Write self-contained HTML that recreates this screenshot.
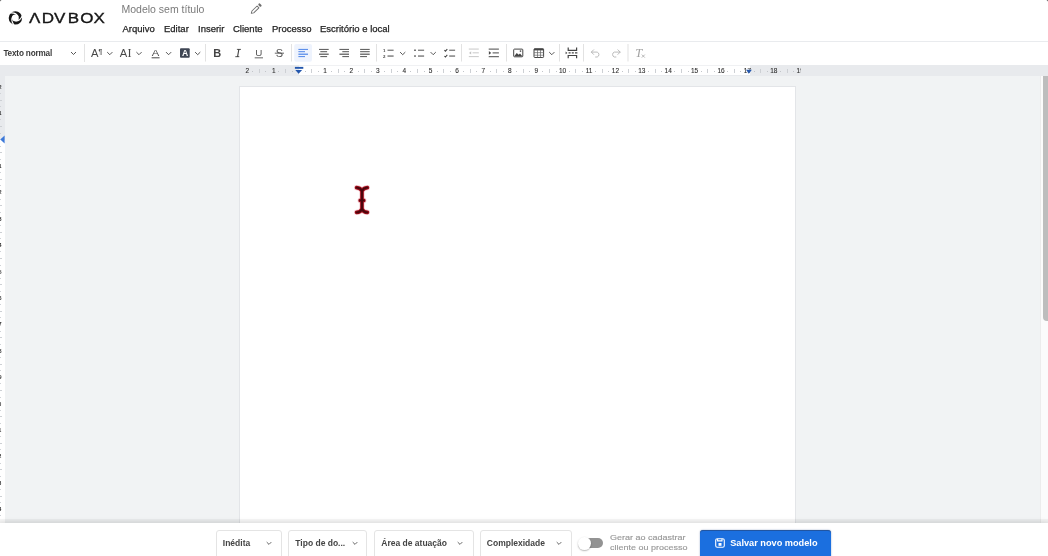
<!DOCTYPE html>
<html lang="pt-BR">
<head>
<meta charset="utf-8">
<title>Modelo sem título</title>
<style>
*{box-sizing:border-box;margin:0;padding:0}
html,body{width:1048px;height:556px;overflow:hidden;background:#fff}
body{font-family:"Liberation Sans",sans-serif;position:relative;color:#222}
#header,#toolbar,#rulerband,#bottom,#gerar,#save,#vruler{will-change:transform}
.abs{position:absolute}
#header{position:absolute;left:0;top:0;width:1048px;height:42px;background:#fff;border-bottom:1px solid #e9ebee}
#title{position:absolute;left:121.5px;top:3px;font-size:10.5px;line-height:12px;color:#7a7a7a;white-space:nowrap}
.menu{position:absolute;top:23px;-webkit-text-stroke:0.25px #1f1f1f;font-size:9.5px;line-height:11px;color:#1f1f1f;white-space:nowrap}
#toolbar{position:absolute;left:0;top:42px;width:1048px;height:23px;background:#fff}
.sep{position:absolute;top:2px;width:1px;height:18px;background:#e3e3e3}
.ic{position:absolute;overflow:visible}
#style{position:absolute;left:3.4px;top:7.1px;font-size:8.2px;line-height:10px;font-weight:bold;color:#3a3a3a;white-space:nowrap;letter-spacing:-0.18px}
#rulerband{position:absolute;left:0;top:65px;width:1048px;height:11px;background:#e8eaed}
#rclip{position:absolute;left:0;top:0;width:800.6px;height:11px;overflow:hidden}
#rulerwhite{position:absolute;left:298.6px;top:0;width:451.4px;height:9.9px;background:#fff;border-top:1.4px solid #f0f1f3}
.rn{position:absolute;top:1.1px;width:20px;text-align:center;font-size:6.5px;line-height:9px;color:#2e2e2e;-webkit-text-stroke:0.1px #2e2e2e}
.td{position:absolute;top:5.8px;width:1px;height:1.3px;background:#c2c5c9}
.tl{position:absolute;top:4px;width:1px;height:4.2px;background:#cdd0d4}
#editor{position:absolute;left:0;top:76px;width:1048px;height:480px;background:#f1f3f4}
#page{position:absolute;left:239px;top:9.6px;width:557px;height:480px;background:#fff;border:1px solid #e3e5e8}
#vruler{position:absolute;left:0;top:76px;width:4.8px;height:447px;background:#fff;overflow:hidden}
#vgray{position:absolute;left:0;top:0;width:5px;height:63.5px;background:#e8eaed}
.vn{position:absolute;left:-8.6px;width:10px;font-size:5px;line-height:8px;color:#2c2c2c;text-align:right;margin-top:-75px;font-weight:bold}
.vd{position:absolute;left:0;width:1.2px;height:1px;background:#cfd2d6;margin-top:-76px}
.vl{position:absolute;left:0;width:2.4px;height:1px;background:#cdd0d4;margin-top:-76px}
#sbtrack{position:absolute;left:1040.4px;top:76px;width:8px;height:447px;background:#fbfbfb;border-left:1px solid #ececec}
#sbthumb{position:absolute;left:1043px;top:70px;width:8px;height:251px;background:#bdbdbd;border-radius:4px;clip-path:inset(6px 0 0 0)}
#bottom{position:absolute;left:0;top:523.3px;width:1048px;height:33px;background:#fff;box-shadow:0 -2px 5px rgba(0,0,0,.05)}
#shade{position:absolute;left:0;top:519.1px;width:1048px;height:4.2px;background:linear-gradient(rgba(0,0,0,.035),rgba(0,0,0,.07))}
.sel{position:absolute;top:7px;height:34px;border:1px solid #e4e4e4;border-radius:3px;background:#fff}
.sel span{position:absolute;left:6.3px;top:6.7px;font-size:8.5px;line-height:10px;font-weight:bold;color:#444;white-space:nowrap}
#gerar{position:absolute;left:609.6px;top:533.3px;font-size:8px;line-height:10px;color:#989898;-webkit-text-stroke:0.15px #989898;white-space:nowrap;transform:scaleX(1.125);transform-origin:0 0}
#save{position:absolute;left:700.2px;top:530.4px;width:131px;height:34px;background:#1b6fdf;border-radius:3px;box-shadow:0 0 1.5px rgba(20,60,130,.6),inset 0 0.9px 0 rgba(40,60,100,.5)}
#save span{position:absolute;left:30.2px;top:7.7px;font-size:9.2px;line-height:11px;font-weight:bold;color:#fff;white-space:nowrap}
</style>
</head>
<body>
<div id="header">
  <!-- corner mark -->
  <svg class="ic" style="left:0;top:0" width="4" height="3" viewBox="0 0 4 3"><path d="M0 0H1.7A1.7 1.7 0 0 0 0 1.7z" fill="#2c2c2c"/></svg>
  <!-- logo -->
  <svg class="ic" style="left:8px;top:10px" width="16" height="16" viewBox="0 0 16 16">
    <circle cx="7.4" cy="7.9" r="5.05" fill="none" stroke="#161616" stroke-width="3.3"/>
    <path d="M1.98 3.02 Q8.37 2.39 10.09 6.81 M14.34 5.64 Q11.69 11.50 7.00 10.77 M5.88 15.04 Q2.14 9.82 5.11 6.11" fill="none" stroke="#fff" stroke-width="1.15"/>
  </svg>
  <svg class="ic" style="left:0;top:0" width="120" height="40" viewBox="0 0 120 40">
    <text transform="translate(0 22.9) scale(1.15 1)" font-family="Liberation Sans, sans-serif" font-size="14.8" fill="#161616" stroke="#161616" stroke-width="0.35" x="25.13 36.35 46.87 58.96 69.87 81.4" y="0">ΛDVBOX</text>
  </svg>
  <svg class="ic" style="left:1044px;top:0" width="4" height="3" viewBox="0 0 4 3"><path d="M4 0H2.3A1.7 1.7 0 0 1 4 1.7z" fill="#2c2c2c"/></svg>
  <div id="title">Modelo sem título</div>
  <!-- pencil -->
  <svg class="ic" style="left:250px;top:3px" width="13" height="13" viewBox="0 0 13 13">
    <g transform="translate(1.1 10.6) rotate(-44)">
      <path d="M0.3 0 L2.4 -1.3 H9.6 V1.3 H2.4 Z" fill="none" stroke="#6e6e6e" stroke-width="0.95" stroke-linejoin="round"/>
      <rect x="11.2" y="-1.8" width="2.2" height="3.6" rx="0.9" fill="#6e6e6e"/>
    </g>
  </svg>
  <div class="menu" style="left:122.5px">Arquivo</div>
  <div class="menu" style="left:164px">Editar</div>
  <div class="menu" style="left:198px">Inserir</div>
  <div class="menu" style="left:233px">Cliente</div>
  <div class="menu" style="left:272px">Processo</div>
  <div class="menu" style="left:320px">Escritório e local</div>
</div>

<div id="toolbar">
  <div id="style">Texto normal</div>
  <svg class="ic chev" style="left:70.1px;top:9px" width="7" height="5" viewBox="0 0 7 5"><path d="M1 1 L3.5 3.5 L6 1" fill="none" stroke="#444" stroke-width="0.9"/></svg>
  <div class="sep" style="left:84.2px"></div>
    <svg class="ic" style="left:0;top:0" width="700" height="23" viewBox="0 42 700 23" font-family="Liberation Sans, sans-serif">
    <!-- active align-left background -->
    <rect x="294.2" y="44" width="17.8" height="17.7" rx="2" fill="#eef3fd"/>
    <!-- separators -->
    <g fill="#e2e2e2">
      <rect x="205" y="44" width="1" height="17.5"/>
      <rect x="291" y="44" width="1" height="17.5"/>
      <rect x="376" y="44" width="1" height="17.5"/>
      <rect x="461" y="44" width="1" height="17.5"/>
      <rect x="506" y="44" width="1" height="17.5"/>
      <rect x="559" y="44" width="1" height="17.5"/>
      <rect x="583" y="44" width="1" height="17.5"/>
      <rect x="627.5" y="44" width="1" height="17.5"/>
    </g>
    <!-- chevrons -->
    <g fill="none" stroke="#444" stroke-width="0.9">
      <path d="M107.2 52.1 L109.8 54.7 L112.4 52.1"/>
      <path d="M136.4 52.1 L139 54.7 L141.6 52.1"/>
      <path d="M166 52.1 L168.6 54.7 L171.2 52.1"/>
      <path d="M195.1 52.1 L197.7 54.7 L200.3 52.1"/>
      <path d="M400.1 52.1 L402.7 54.7 L405.3 52.1"/>
      <path d="M430.6 52.1 L433.2 54.7 L435.8 52.1"/>
      <path d="M549.2 52.1 L551.8 54.7 L554.4 52.1"/>
    </g>
    <!-- font family A¶ -->
    <text x="91" y="57.3" font-size="11.2" fill="#484848">A</text>
    <text x="98.5" y="53.8" font-size="6.6" font-weight="bold" fill="#555">¶</text>
    <!-- font size AI -->
    <text x="119.8" y="57.3" font-size="11.2" fill="#484848">A</text>
    <text x="127.6" y="57.3" font-size="12.1" font-family="Liberation Serif, serif" fill="#484848">I</text>
    <!-- font color -->
    <text transform="translate(151.7 56.1) scale(1.2 1)" x="0" y="0" font-size="9.4" fill="#484848">A</text>
    <rect x="151.6" y="57.3" width="8" height="1" fill="#484848"/>
    <!-- highlight -->
    <rect x="180" y="48.2" width="9.7" height="9.6" rx="1" fill="#3f4654"/>
    <text x="182" y="56.3" font-size="8.6" font-weight="bold" fill="#fff">A</text>
    <!-- B I U S -->
    <text x="213.2" y="57" font-size="11" font-weight="bold" fill="#444">B</text>
    <text x="235.9" y="57" font-size="12" font-style="italic" font-family="Liberation Serif, serif" fill="#444">I</text>
    <path d="M236.9 49.4 H241 M235.2 56.7 H239.3" stroke="#444" stroke-width="0.8" fill="none"/>
    <text x="255.3" y="56" font-size="9.8" fill="#555">U</text>
    <rect x="254.7" y="57.4" width="8.3" height="0.9" fill="#555"/>
    <text x="275.8" y="57.2" font-size="11" fill="#555">S</text>
    <rect x="274.8" y="52.7" width="9.2" height="0.9" fill="#555"/>
    <!-- align left (active) -->
    <g fill="#4f86e8">
      <rect x="298.4" y="48.9" width="9.6" height="1"/>
      <rect x="298.4" y="51.2" width="6.6" height="1"/>
      <rect x="298.4" y="53.6" width="9.6" height="1.2"/>
      <rect x="298.4" y="56.1" width="6.6" height="1"/>
    </g>
    <g fill="#555">
      <!-- center -->
      <rect x="319" y="48.9" width="9.7" height="1"/>
      <rect x="320.3" y="51.2" width="6.8" height="1"/>
      <rect x="319" y="53.6" width="9.7" height="1.2"/>
      <rect x="320.3" y="56.1" width="6.8" height="1"/>
      <!-- right -->
      <rect x="339.4" y="48.9" width="9.6" height="1"/>
      <rect x="342.3" y="51.2" width="6.7" height="1"/>
      <rect x="339.4" y="53.6" width="9.6" height="1.2"/>
      <rect x="342.3" y="56.1" width="6.7" height="1"/>
      <!-- justify -->
      <rect x="360.1" y="48.9" width="9.6" height="1"/>
      <rect x="360.1" y="51.2" width="9.6" height="1"/>
      <rect x="360.1" y="53.6" width="9.6" height="1.2"/>
      <rect x="360.1" y="56.1" width="6.9" height="1"/>
      <!-- numbered list lines -->
      <rect x="387.5" y="49.7" width="6.1" height="1"/>
      <rect x="387.5" y="55.5" width="6.1" height="1.1"/>
      <!-- bullets -->
      <rect x="414.2" y="49.5" width="1.6" height="1.5"/>
      <rect x="414.2" y="55.3" width="1.6" height="1.5"/>
      <rect x="418" y="49.7" width="6.1" height="1"/>
      <rect x="418" y="55.5" width="6.1" height="1.1"/>
      <!-- todo lines -->
      <rect x="449.2" y="49.7" width="5.9" height="1"/>
      <rect x="449.2" y="55.5" width="5.9" height="1.1"/>
    </g>
    <text x="383" y="51.7" font-size="4.4" font-weight="bold" fill="#444">1</text>
    <text x="383" y="57.6" font-size="4.4" font-weight="bold" fill="#444">2</text>
    <g fill="none" stroke="#444" stroke-width="1.05">
      <path d="M444.4 50.2 L445.4 51.2 L447.3 49.1"/>
      <path d="M444.4 56 L445.4 57 L447.3 54.9"/>
    </g>
    <!-- outdent (disabled) -->
    <g fill="#c2c2c2">
      <rect x="468.8" y="48.6" width="10" height="0.9"/>
      <rect x="472.6" y="52.4" width="6.2" height="0.9"/>
      <rect x="468.8" y="56.2" width="10" height="0.9"/>
      <path d="M471.2 51.2 V54.6 L469 52.9 Z"/>
    </g>
    <!-- indent -->
    <g fill="#4a4a4a">
      <rect x="488.7" y="48.6" width="10.2" height="1"/>
      <rect x="492.6" y="52.4" width="6.3" height="1"/>
      <rect x="488.7" y="56.2" width="10.2" height="1"/>
      <path d="M488.9 51.1 V54.7 L491.2 52.9 Z"/>
    </g>
    <!-- image -->
    <rect x="513.7" y="49.1" width="9.1" height="7.7" rx="0.8" fill="none" stroke="#444" stroke-width="1"/>
    <path d="M514.2 56.3 L516.8 53 L518.6 54.8 L520 53.6 L522.3 56.3 Z" fill="#444"/>
    <rect x="519.8" y="50.4" width="1.4" height="1.4" fill="#444"/>
    <!-- table -->
    <rect x="534" y="48.8" width="9.6" height="8.7" rx="0.8" fill="none" stroke="#444" stroke-width="1"/>
    <rect x="534" y="48.6" width="9.6" height="1.8" fill="#444"/>
    <g fill="#666">
      <rect x="537" y="50" width="0.7" height="7.4"/>
      <rect x="540" y="50" width="0.7" height="7.4"/>
      <rect x="534" y="52.4" width="9.6" height="0.7"/>
      <rect x="534" y="54.8" width="9.6" height="0.7"/>
    </g>
    <!-- page break -->
    <g fill="none" stroke="#444" stroke-width="1.2">
      <path d="M568.2 47.6 V50.3 H576.6 V47.6"/>
      <path d="M568.2 58.2 V55.5 H576.6 V58.2"/>
      <path d="M568.6 52.9 H570.6 M571.8 52.9 H573.8 M575 52.9 H577.4" stroke-width="1.3"/>
    </g>
    <path d="M565.6 51.5 V54.3 L567.4 52.9 Z" fill="#444"/>
    <!-- undo / redo (disabled) -->
    <g fill="none" stroke="#b3b3b3" stroke-width="0.9" stroke-linecap="round" stroke-linejoin="round">
      <path d="M593.6 49.8 L591.3 52.1 L593.6 54.4"/>
      <path d="M591.5 52.1 H597.2 A2.6 2.6 0 0 1 597.2 57 H595.6"/>
      <path d="M617.9 49.8 L620.2 52.1 L617.9 54.4"/>
      <path d="M620 52.1 H614.3 A2.6 2.6 0 0 0 614.3 57 H615.9"/>
    </g>
    <!-- remove format -->
    <text x="635.3" y="57.2" font-size="12.6" font-style="italic" font-family="Liberation Serif, serif" fill="#a2a2a2">T</text>
    <path d="M641.8 54.6 L644.8 57.6 M644.8 54.6 L641.8 57.6" fill="none" stroke="#a5a5a5" stroke-width="0.8"/>
  </svg>

</div>

<div id="rulerband">
  <div id="rulerwhite"></div>
<div id="rclip">
<span class="rn" style="left:237.30px">2</span>
<i class="td" style="left:251.90px"></i>
<i class="tl" style="left:258.50px"></i>
<i class="td" style="left:265.10px"></i>
<span class="rn" style="left:263.70px">1</span>
<i class="td" style="left:278.30px"></i>
<i class="tl" style="left:284.90px"></i>
<i class="td" style="left:291.50px"></i>
<i class="td" style="left:304.70px"></i>
<i class="tl" style="left:311.30px"></i>
<i class="td" style="left:317.90px"></i>
<span class="rn" style="left:315.00px">1</span>
<i class="td" style="left:331.10px"></i>
<i class="tl" style="left:337.70px"></i>
<i class="td" style="left:344.30px"></i>
<span class="rn" style="left:341.40px">2</span>
<i class="td" style="left:357.50px"></i>
<i class="tl" style="left:364.10px"></i>
<i class="td" style="left:370.70px"></i>
<span class="rn" style="left:367.80px">3</span>
<i class="td" style="left:383.90px"></i>
<i class="tl" style="left:390.50px"></i>
<i class="td" style="left:397.10px"></i>
<span class="rn" style="left:394.20px">4</span>
<i class="td" style="left:410.30px"></i>
<i class="tl" style="left:416.90px"></i>
<i class="td" style="left:423.50px"></i>
<span class="rn" style="left:420.60px">5</span>
<i class="td" style="left:436.70px"></i>
<i class="tl" style="left:443.30px"></i>
<i class="td" style="left:449.90px"></i>
<span class="rn" style="left:447.00px">6</span>
<i class="td" style="left:463.10px"></i>
<i class="tl" style="left:469.70px"></i>
<i class="td" style="left:476.30px"></i>
<span class="rn" style="left:473.40px">7</span>
<i class="td" style="left:489.50px"></i>
<i class="tl" style="left:496.10px"></i>
<i class="td" style="left:502.70px"></i>
<span class="rn" style="left:499.80px">8</span>
<i class="td" style="left:515.90px"></i>
<i class="tl" style="left:522.50px"></i>
<i class="td" style="left:529.10px"></i>
<span class="rn" style="left:526.20px">9</span>
<i class="td" style="left:542.30px"></i>
<i class="tl" style="left:548.90px"></i>
<i class="td" style="left:555.50px"></i>
<span class="rn" style="left:552.60px">10</span>
<i class="td" style="left:568.70px"></i>
<i class="tl" style="left:575.30px"></i>
<i class="td" style="left:581.90px"></i>
<span class="rn" style="left:579.00px">11</span>
<i class="td" style="left:595.10px"></i>
<i class="tl" style="left:601.70px"></i>
<i class="td" style="left:608.30px"></i>
<span class="rn" style="left:605.40px">12</span>
<i class="td" style="left:621.50px"></i>
<i class="tl" style="left:628.10px"></i>
<i class="td" style="left:634.70px"></i>
<span class="rn" style="left:631.80px">13</span>
<i class="td" style="left:647.90px"></i>
<i class="tl" style="left:654.50px"></i>
<i class="td" style="left:661.10px"></i>
<span class="rn" style="left:658.20px">14</span>
<i class="td" style="left:674.30px"></i>
<i class="tl" style="left:680.90px"></i>
<i class="td" style="left:687.50px"></i>
<span class="rn" style="left:684.60px">15</span>
<i class="td" style="left:700.70px"></i>
<i class="tl" style="left:707.30px"></i>
<i class="td" style="left:713.90px"></i>
<span class="rn" style="left:711.00px">16</span>
<i class="td" style="left:727.10px"></i>
<i class="tl" style="left:733.70px"></i>
<i class="td" style="left:740.30px"></i>
<span class="rn" style="left:737.40px">17</span>
<i class="td" style="left:753.50px"></i>
<i class="tl" style="left:760.10px"></i>
<i class="td" style="left:766.70px"></i>
<span class="rn" style="left:763.80px">18</span>
<i class="td" style="left:779.90px"></i>
<i class="tl" style="left:786.50px"></i>
<i class="td" style="left:793.10px"></i>
<span class="rn" style="left:790.20px">19</span>
</div>
  <!-- left indent marker -->
  <svg class="ic" style="left:294px;top:1px" width="10" height="9" viewBox="0 0 10 9">
    <rect x="0.9" y="0.9" width="8.4" height="1.9" fill="#2457ad"/>
    <path d="M1.3 4.1 H8.1 L4.6 7.8 Z" fill="#2457ad"/>
  </svg>
  <!-- right indent marker -->
  <svg class="ic" style="left:744px;top:3px" width="10" height="7" viewBox="0 0 10 7">
    <path d="M2.1 1.8 H7.9 L4.8 5.7 Z" fill="#2457ad"/>
  </svg>
</div>

<div id="editor">
  <div id="page"></div>
</div>
<div id="vruler">
  <div id="vgray"></div>
<span class="vn" style="top:81.80px">2</span>
<i class="vd" style="top:92.90px"></i>
<i class="vl" style="top:99.50px"></i>
<i class="vd" style="top:106.10px"></i>
<span class="vn" style="top:108.20px">1</span>
<i class="vd" style="top:119.30px"></i>
<i class="vl" style="top:125.90px"></i>
<i class="vd" style="top:132.50px"></i>
<i class="vd" style="top:145.70px"></i>
<i class="vl" style="top:152.30px"></i>
<i class="vd" style="top:158.90px"></i>
<span class="vn" style="top:161.00px">1</span>
<i class="vd" style="top:172.10px"></i>
<i class="vl" style="top:178.70px"></i>
<i class="vd" style="top:185.30px"></i>
<span class="vn" style="top:187.40px">2</span>
<i class="vd" style="top:198.50px"></i>
<i class="vl" style="top:205.10px"></i>
<i class="vd" style="top:211.70px"></i>
<span class="vn" style="top:213.80px">3</span>
<i class="vd" style="top:224.90px"></i>
<i class="vl" style="top:231.50px"></i>
<i class="vd" style="top:238.10px"></i>
<span class="vn" style="top:240.20px">4</span>
<i class="vd" style="top:251.30px"></i>
<i class="vl" style="top:257.90px"></i>
<i class="vd" style="top:264.50px"></i>
<span class="vn" style="top:266.60px">5</span>
<i class="vd" style="top:277.70px"></i>
<i class="vl" style="top:284.30px"></i>
<i class="vd" style="top:290.90px"></i>
<span class="vn" style="top:293.00px">6</span>
<i class="vd" style="top:304.10px"></i>
<i class="vl" style="top:310.70px"></i>
<i class="vd" style="top:317.30px"></i>
<span class="vn" style="top:319.40px">7</span>
<i class="vd" style="top:330.50px"></i>
<i class="vl" style="top:337.10px"></i>
<i class="vd" style="top:343.70px"></i>
<span class="vn" style="top:345.80px">8</span>
<i class="vd" style="top:356.90px"></i>
<i class="vl" style="top:363.50px"></i>
<i class="vd" style="top:370.10px"></i>
<span class="vn" style="top:372.20px">9</span>
<i class="vd" style="top:383.30px"></i>
<i class="vl" style="top:389.90px"></i>
<i class="vd" style="top:396.50px"></i>
<span class="vn" style="top:398.60px">10</span>
<i class="vd" style="top:409.70px"></i>
<i class="vl" style="top:416.30px"></i>
<i class="vd" style="top:422.90px"></i>
<span class="vn" style="top:425.00px">11</span>
<i class="vd" style="top:436.10px"></i>
<i class="vl" style="top:442.70px"></i>
<i class="vd" style="top:449.30px"></i>
<span class="vn" style="top:451.40px">12</span>
<i class="vd" style="top:462.50px"></i>
<i class="vl" style="top:469.10px"></i>
<i class="vd" style="top:475.70px"></i>
<span class="vn" style="top:477.80px">13</span>
<i class="vd" style="top:488.90px"></i>
<i class="vl" style="top:495.50px"></i>
<i class="vd" style="top:502.10px"></i>
<span class="vn" style="top:504.20px">14</span>
<i class="vd" style="top:515.30px"></i>
  <svg class="ic" style="left:0;top:58.6px" width="5" height="9" viewBox="0 0 5 9"><path d="M4.6 0.6 V8.4 L0.3 4.5 Z" fill="#3b78d8"/></svg>
</div>
<div id="sbtrack"></div>
<div id="sbthumb"></div>

<!-- I-beam cursor -->
<svg class="ic" style="left:352px;top:183px" width="20" height="34" viewBox="0 0 20 34">
  <g fill="none" stroke-linecap="round" stroke-linejoin="round">
    <path d="M4.6 4.6 Q8.6 4.8 10 8 Q11.4 4.8 15.4 4.6 M10 8 V26 M4.6 29.4 Q8.6 29.2 10 26 Q11.4 29.2 15.4 29.4 M8.2 17.4 H11.8" stroke="#ee9aa6" stroke-width="5.2" opacity=".5"/>
    <path d="M4.6 4.6 Q8.6 4.8 10 8 Q11.4 4.8 15.4 4.6 M10 8 V26 M4.6 29.4 Q8.6 29.2 10 26 Q11.4 29.2 15.4 29.4 M8.2 17.4 H11.8" stroke="#9d0c1a" stroke-width="3.7"/>
    <path d="M4.6 4.6 Q8.6 4.8 10 8 Q11.4 4.8 15.4 4.6 M10 8 V26 M4.6 29.4 Q8.6 29.2 10 26 Q11.4 29.2 15.4 29.4 M8.2 17.4 H11.8" stroke="#4a060c" stroke-width="1.9"/>
  </g>
</svg>

<div id="shade"></div>
<div id="bottom">
  <div class="sel" style="left:215.5px;width:66.5px"><span>Inédita</span>
    <svg class="ic" style="left:48.1px;top:10.3px" width="8" height="5" viewBox="0 0 8 5"><path d="M1.7 1.1 L4 3.4 L6.3 1.1" fill="none" stroke="#555" stroke-width="0.9"/></svg></div>
  <div class="sel" style="left:288px;width:79px"><span>Tipo de do...</span>
    <svg class="ic" style="left:62.2px;top:10.3px" width="8" height="5" viewBox="0 0 8 5"><path d="M1.7 1.1 L4 3.4 L6.3 1.1" fill="none" stroke="#555" stroke-width="0.9"/></svg></div>
  <div class="sel" style="left:374px;width:99.5px"><span>Área de atuação</span>
    <svg class="ic" style="left:80.8px;top:10.3px" width="8" height="5" viewBox="0 0 8 5"><path d="M1.7 1.1 L4 3.4 L6.3 1.1" fill="none" stroke="#555" stroke-width="0.9"/></svg></div>
  <div class="sel" style="left:479.5px;width:92.5px"><span>Complexidade</span>
    <svg class="ic" style="left:74.3px;top:10.3px" width="8" height="5" viewBox="0 0 8 5"><path d="M1.7 1.1 L4 3.4 L6.3 1.1" fill="none" stroke="#555" stroke-width="0.9"/></svg></div>
</div>
<!-- toggle -->
<div class="abs" style="left:585px;top:538.4px;width:18px;height:9.3px;border-radius:5px;background:#939393"></div>
<div class="abs" style="left:578.4px;top:537.4px;width:12.8px;height:12.8px;border-radius:50%;background:#fff;box-shadow:0 0.8px 1.6px rgba(0,0,0,.35)"></div>
<div id="gerar">Gerar ao cadastrar<br>cliente ou processo</div>
<div id="save">
  <svg class="ic" style="left:14.7px;top:8.2px" width="10" height="10" viewBox="0 0 10 10">
    <g fill="none" stroke="#fff" stroke-width="1.1" stroke-linejoin="round">
      <rect x="0.7" y="0.7" width="8.6" height="8.6" rx="1.6"/>
      <path d="M2.6 0.9 V2.9 H7.0 V0.9"/>
    </g>
    <rect x="3.5" y="5" width="3" height="2.8" fill="#fff"/>
  </svg>
  <span>Salvar novo modelo</span>
</div>
</body>
</html>
